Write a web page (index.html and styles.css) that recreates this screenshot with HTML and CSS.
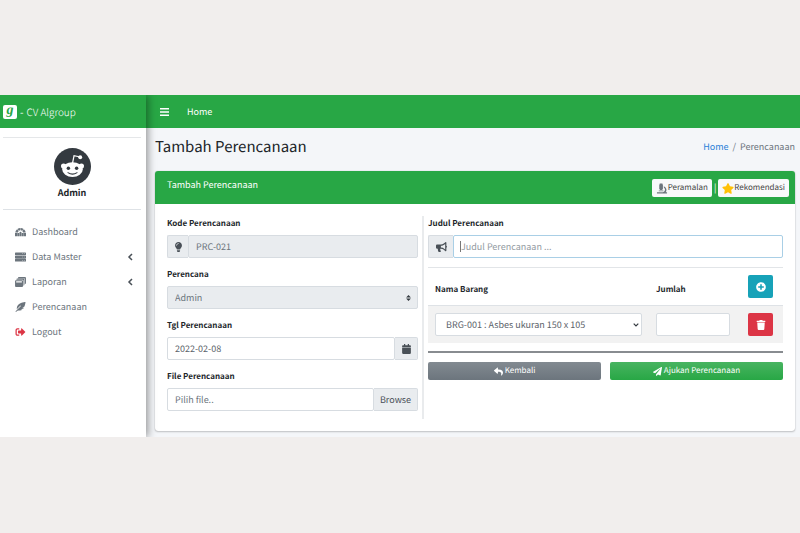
FILE: index.html
```html
<!DOCTYPE html>
<html lang="id">
<head>
<meta charset="utf-8">
<meta name="viewport" content="width=device-width, initial-scale=1">
<title>Tambah Perencanaan - CV Algroup</title>
<link rel="stylesheet" href="styles.css">
</head>
<body>
<div class="app">
  <aside class="sidebar">
    <a class="brand" href="#"><span class="brand-logo">g</span><b>-</b> CV Algroup</a>
    <div class="user">
      <svg class="avatar" viewBox="0 0 36 36" aria-hidden="true">
        <circle class="dark" cx="18" cy="18" r="18"/>
        <path d="M18 15l1.500-7.500 5 1" fill="none" stroke="#fff" stroke-width="1.200"/>
        <circle class="light" cx="25.500" cy="9" r="1.900"/>
        <circle class="light" cx="9.300" cy="17.500" r="2.500"/><circle class="light" cx="26.700" cy="17.500" r="2.500"/>
        <ellipse class="light" cx="18" cy="21" rx="10" ry="7.200"/>
        <circle class="dark" cx="14" cy="19.700" r="1.700"/><circle class="dark" cx="22" cy="19.700" r="1.700"/>
        <path class="smile" d="M13.500 24q4.500 2.800 9 0"/>
      </svg>
      <b>Admin</b>
    </div>
    <nav class="menu">
      <a href="#">
        <svg viewBox="0 0 24 20"><path d="M0 19v-7h5v7zm5.500 0v-7H9v7zm9.500 0v-7h3.500v7zm4 0v-7h5v7zM.5 11.300A12 12 0 0 1 4.500 4L8 8a7 7 0 0 0-1.500 3.300zM5.300 3.500A12 12 0 0 1 11.600 1v5a7 7 0 0 0-3 1.300zM12.400 1a12 12 0 0 1 6.300 2.500l-3.300 3.800a7 7 0 0 0-3-1.300zM19.500 4a12 12 0 0 1 4 7.300h-6A7 7 0 0 0 16 8zM9.700 19v-7a2.300 2.300 0 0 1 4.600 0v7z"/></svg>
        <span>Dashboard</span></a>
      <a href="#">
        <svg viewBox="0 0 24 20"><path fill-rule="evenodd" d="M1 0h22a1 1 0 0 1 1 1v4a1 1 0 0 1-1 1H1a1 1 0 0 1-1-1V1a1 1 0 0 1 1-1zm0 7h22a1 1 0 0 1 1 1v4a1 1 0 0 1-1 1H1a1 1 0 0 1-1-1V8a1 1 0 0 1 1-1zm0 7h22a1 1 0 0 1 1 1v4a1 1 0 0 1-1 1H1a1 1 0 0 1-1-1v-4a1 1 0 0 1 1-1zM16 2.300v1.400h1.500V2.300zm3.500 0v1.400H21V2.300zM16 9.300v1.400h1.500V9.300zm3.500 0v1.400H21V9.300zM16 16.300v1.400h1.500v-1.400zm3.500 0v1.400H21v-1.400z"/></svg>
        <span>Data Master</span>
        <svg class="chevron" viewBox="0 0 6 8"><path d="M5 1L2 4l3 3"/></svg></a>
      <a href="#">
        <svg viewBox="0 0 24 22"><path fill-rule="evenodd" d="M2 7h13.500a2 2 0 0 1 2 2v11a2 2 0 0 1-2 2H2a2 2 0 0 1-2-2V9a2 2 0 0 1 2-2zm.500 2.500V12H15V9.500zM3 6V5.500Q3 3.500 5 3.500h13.500q2 0 2 2V17q0 1.500-2 2V8q0-2-2-2zM6.500 2.500V2q0-2 2-2H22q2 0 2 2v11.500q0 1.500-2.500 2V4.500q0-2-2-2z"/></svg>
        <span>Laporan</span>
        <svg class="chevron" viewBox="0 0 6 8"><path d="M5 1L2 4l3 3"/></svg></a>
      <a href="#">
        <svg viewBox="0 0 512 512"><path d="M512 0C460.220 3.560 96.440 38.200 71.010 287.610c-3.090 26.660-4.840 53.440-5.990 80.240l178.870-178.690c6.250-6.250 16.400-6.250 22.650 0s6.250 16.380 0 22.630L7.040 471.030c-9.380 9.370-9.380 24.570 0 33.940 9.380 9.370 24.600 9.370 33.980 0l57.130-57.070c42.090-.140 84.150-2.530 125.960-7.360 53.480-5.440 97.020-26.470 132.580-56.540H255.740l146.790-48.880c11.250-14.890 21.370-30.710 30.450-47.120h-81.140l106.540-53.210C500.290 132.860 510.190 26.260 512 0z"/></svg>
        <span>Perencanaan</span></a>
      <a href="#">
        <svg class="red" viewBox="0 0 512 512"><path d="M497 273L329 441c-15 15-41 4.500-41-17v-96H152c-13.300 0-24-10.700-24-24v-96c0-13.300 10.700-24 24-24h136V88c0-21.400 25.900-32 41-17l168 168c9.300 9.400 9.300 24.600 0 34zM192 436v-40c0-6.600-5.400-12-12-12H96c-17.700 0-32-14.300-32-32V160c0-17.700 14.300-32 32-32h84c6.600 0 12-5.400 12-12V76c0-6.600-5.400-12-12-12H96c-53 0-96 43-96 96v192c0 53 43 96 96 96h84c6.600 0 12-5.400 12-12z"/></svg>
        <span>Logout</span></a>
    </nav>
  </aside>

  <div class="main">
    <nav class="topbar">
      <button class="toggle" type="button" aria-label="Menu"><svg viewBox="0 0 9 8"><path d="M0 0h9v1.500H0zM0 3.200h9v1.500H0zM0 6.400h9v1.500H0z"/></svg></button>
      <a href="#">Home</a>
    </nav>
    <header class="page-head">
      <h1>Tambah Perencanaan</h1>
      <div class="crumbs"><a href="#">Home</a><span>/</span><span>Perencanaan</span></div>
    </header>

    <section class="card">
      <div class="card-head">
        <h2>Tambah Perencanaan</h2>
        <div class="tools">
          <button type="button"><svg class="scope" viewBox="0 0 24 24"><path d="M7 1h6v2h1v10h-1v2H7v-2H6V3h1zM1 20h13a5.500 5.500 0 0 0 2-10V7a8.500 8.500 0 0 1 4 13h3v3H1zM5 16.500h10V18H5z"/></svg>Peramalan</button>
          <span>|</span>
          <button type="button"><svg class="star" viewBox="0 0 576 512"><path d="M259.300 17.800L194 150.200 47.900 171.500c-26.200 3.800-36.700 36.100-17.700 54.600l105.700 103-25 145.500c-4.500 26.300 23.200 46 46.400 33.700L288 439.600l130.700 68.700c23.200 12.200 50.900-7.400 46.400-33.700l-25-145.500 105.700-103c19-18.500 8.500-50.800-17.700-54.600L382 150.200 316.700 17.800c-11.700-23.600-45.600-23.900-57.400 0z"/></svg>Rekomendasi</button>
        </div>
      </div>

      <form class="card-body">
        <div class="col-left">
          <div class="field">
            <label for="kode">Kode Perencanaan</label>
            <div class="group">
              <span class="addon narrow"><svg viewBox="0 0 352 512"><path fill-rule="evenodd" d="M96 454c0 6 2 12 5 17l17 26c6 9 16 15 27 15h62c11 0 21-6 27-15l17-26c3-5 5-11 5-17v-38H96zM0 176c0 44 16 85 44 116 16 19 42 58 52 92h160c10-34 36-73 52-92 28-31 44-72 44-116C352 79 273 0 176 0S0 79 0 176zm176-80c-44 0-80 36-80 80 0 9-7 16-16 16s-16-7-16-16c0-62 50-112 112-112 9 0 16 7 16 16s-7 16-16 16z"/></svg></span>
              <input id="kode" type="text" value="PRC-021" readonly>
            </div>
          </div>
          <div class="field">
            <label for="perencana">Perencana</label>
            <div class="select-wrap">
              <select id="perencana" class="muted" disabled><option>Admin</option></select>
              <svg class="updown" viewBox="0 0 4 5"><path d="M2 0L0 2h4zM2 5L0 3h4z"/></svg>
            </div>
          </div>
          <div class="field">
            <label for="tgl">Tgl Perencanaan</label>
            <div class="group">
              <input id="tgl" type="text" value="2022-02-08">
              <span class="addon end"><svg viewBox="0 0 448 512"><path d="M12 192h424c6.600 0 12 5.400 12 12v260c0 26.500-21.500 48-48 48H48c-26.500 0-48-21.500-48-48V204c0-6.600 5.400-12 12-12zm436-44v-36c0-26.500-21.500-48-48-48h-48V12c0-6.600-5.400-12-12-12h-40c-6.600 0-12 5.400-12 12v52H160V12c0-6.600-5.400-12-12-12h-40c-6.600 0-12 5.400-12 12v52H48C21.500 64 0 85.500 0 112v36c0 6.600 5.400 12 12 12h424c6.600 0 12-5.400 12-12z"/></svg></span>
            </div>
          </div>
          <div class="field">
            <label for="file">File Perencanaan</label>
            <div class="group">
              <input id="file" type="text" value="Pilih file.." readonly class="file">
              <button class="addon end browse" type="button">Browse</button>
            </div>
          </div>
        </div>

        <div class="col-right">
          <div class="field">
            <label for="judul">Judul Perencanaan</label>
            <div class="group">
              <span class="addon"><svg viewBox="0 0 576 512"><path d="M576 240c0-23.630-12.950-44.040-32-55.120V32.010C544 23.260 537.020 0 512 0c-7.120 0-14.190 2.380-19.980 7.020l-85.030 68.030C364.280 109.190 310.660 128 256 128H64c-35.350 0-64 28.650-64 64v96c0 35.350 28.650 64 64 64h33.700c-1.390 10.480-2.180 21.140-2.180 32 0 39.770 9.260 77.350 25.560 110.940 5.190 10.690 16.520 17.060 28.400 17.060h74.280c26.050 0 41.690-29.840 25.900-50.560-16.400-21.520-26.150-48.360-26.150-77.440 0-11.110 1.620-21.790 4.410-32H256c54.660 0 108.280 18.810 150.980 52.950l85.030 68.030a32.023 32.023 0 0 0 19.980 7.020c24.920 0 32-22.780 32-32V295.130C563.050 284.040 576 263.630 576 240zm-96 141.420l-33.050-26.440C392.950 311.780 325.120 288 256 288v-96c69.120 0 136.950-23.780 190.950-66.980L480 98.580v282.840z"/></svg></span>
              <div class="caret-wrap"><input id="judul" class="focused" type="text" placeholder="Judul Perencanaan ..."></div>
            </div>
          </div>
          <table class="items">
            <thead>
              <tr><th>Nama Barang</th><th class="qty">Jumlah</th>
              <th class="act"><button class="square info" type="button" aria-label="Tambah barang"><svg viewBox="0 0 512 512"><path d="M256 8C119 8 8 119 8 256s111 248 248 248 248-111 248-248S393 8 256 8zm144 276c0 6.600-5.400 12-12 12h-92v92c0 6.600-5.400 12-12 12h-56c-6.600 0-12-5.400-12-12v-92h-92c-6.600 0-12-5.400-12-12v-56c0-6.600 5.400-12 12-12h92v-92c0-6.600 5.400-12 12-12h56c6.600 0 12 5.400 12 12v92h92c6.600 0 12 5.400 12 12v56z"/></svg></button></th></tr>
            </thead>
            <tbody>
              <tr><td><div class="select-wrap"><select aria-label="Nama Barang"><option>BRG-001 : Asbes ukuran 150 x 105</option></select><svg class="down" viewBox="0 0 6 4"><path d="M.7.700L3 3 5.300.7"/></svg></div></td>
              <td><input type="text" aria-label="Jumlah"></td>
              <td class="act"><button class="square danger" type="button" aria-label="Hapus barang"><svg viewBox="0 0 448 512"><path d="M432 32H312l-9.400-18.700A24 24 0 0 0 281.100 0H166.800a23.720 23.720 0 0 0-21.400 13.300L136 32H16A16 16 0 0 0 0 48v32a16 16 0 0 0 16 16h416a16 16 0 0 0 16-16V48a16 16 0 0 0-16-16zM53.200 467a48 48 0 0 0 47.900 45h245.800a48 48 0 0 0 47.900-45L416 128H32z"/></svg></button></td></tr>
            </tbody>
          </table>
          <hr>
          <div class="actions">
            <button class="back" type="button"><svg viewBox="0 0 512 512"><path d="M8.309 189.836L184.313 37.851C199.719 24.546 224 35.347 224 56.015v80.053c160.629 1.839 288 34.032 288 186.258 0 61.441-39.581 122.309-83.333 154.132-13.653 9.931-33.111-2.533-28.077-18.631 45.344-145.012-21.507-183.510-176.590-185.742V360c0 20.700-24.300 31.453-39.687 18.164l-176.004-152c-11.071-9.562-11.086-26.753 0-36.328z"/></svg>Kembali</button>
            <button class="send" type="button"><svg viewBox="0 0 512 512"><path d="M476 3.200L12.500 270.600c-18.100 10.400-15.800 35.600 2.200 43.200L121 358.400l287.300-253.200c5.500-4.900 13.300 2.600 8.600 8.300L176 407v80.500c0 23.600 28.500 32.900 42.500 15.800L282 426l124.600 52.200c14.200 6 30.400-2.900 33-18.200l72-432C515 7.800 493.300-6.800 476 3.200z"/></svg>Ajukan Perencanaan</button>
          </div>
        </div>
      </form>
    </section>
  </div>
</div>
</body>
</html>
```

FILE: styles.css
```css
* { box-sizing: border-box; }

body {
  margin: 0;
  padding: 95px 0;
  background: #f1eeed;
  color: #212529;
  font: 9px/16px "Noto Sans CJK SC", "Open Sans", sans-serif;
  text-rendering: geometricPrecision;
}

a { color: inherit; text-decoration: none; }
svg { display: block; fill: currentColor; flex: none; }
h1, h2 { margin: 0; font-weight: 400; }
button, input, select { font: inherit; color: inherit; margin: 0; text-rendering: inherit; }
button { display: flex; align-items: center; justify-content: center; padding: 0; border: 0; }

.app { display: grid; grid-template-columns: 146px minmax(0, 1fr); background: #f4f6f9; }

/* Sidebar */
.sidebar { position: relative; background: #fff; box-shadow: 2px 0 8px rgba(0, 0, 0, .4); clip-path: inset(0 -12px 0 0); }
.brand { display: flex; align-items: center; gap: 3px; height: 33px; padding-left: 3px; background: #28a745; color: #fff; font-size: 10px; font-weight: 300; }
.brand-logo { width: 14px; height: 14px; border-radius: 2px; background: #fff; color: #28a745; font: italic bold 14px/11px "Liberation Serif", serif; text-align: center; }
.user { display: flex; flex-direction: column; align-items: center; margin: 9px 5px 9px 3px; padding: 10px 0 8px; border-top: 1px solid #e5e7e9; border-bottom: 1px solid #dee2e6; }
.avatar { width: 37px; height: 37px; }
.avatar .dark { fill: #343a40; }
.avatar .light { fill: #fff; }
.avatar .smile { fill: none; stroke: #343a40; stroke-width: 1; stroke-linecap: round; }
.menu a { display: flex; align-items: center; gap: 6px; height: 25px; padding: 0 13px 0 15px; color: #6c757d; }
.menu svg { width: 11px; height: 10px; }
.menu span { flex: 1; }
.menu .red { color: #dc3545; }
.menu .chevron { width: 6px; height: 8px; fill: none; stroke: #495057; stroke-width: 1.500; }

/* Top bar and page title */
.topbar { display: flex; align-items: center; gap: 18px; height: 33px; padding-left: 14px; background: #28a745; color: #fff; }
.toggle { background: none; }
.toggle svg { width: 9px; height: 8px; }
.page-head { display: flex; align-items: center; justify-content: space-between; height: 43px; padding: 0 5px 6px 9px; }
h1 { font-size: 15px; line-height: 24px; }
.crumbs { display: flex; gap: 4px; color: #6c757d; }
.crumbs a { color: #2a80d8; }

/* Card */
.card { margin: 0 5px 6px 9px; border-radius: 3px; background: #fff; box-shadow: 0 0 1px rgba(0, 0, 0, .3), 0 1px 2px rgba(0, 0, 0, .2); }
.card-head { display: flex; justify-content: space-between; height: 33px; padding: 6px 6px 0 12px; border-radius: 3px 3px 0 0; background: #28a745; color: #fff; }
.card-head h2 { font-size: 9px; line-height: 16px; }
.tools { display: flex; align-items: center; gap: 2px; height: 22px; }
.tools button { height: 18px; padding: 0 4px; border-radius: 2px; background: #f8f9fa; color: #444; font-size: 8px; }
.tools svg { width: 12px; height: 11px; }
.tools .scope { fill: #6c757d; }
.tools .star { fill: #ffc107; }
.card-body { display: grid; grid-template-columns: 257fr 359fr; padding: 12px; }
.col-left { padding-right: 4px; border-right: 2px solid #e9ebed; }
.col-right { padding-left: 4px; }

/* Form fields */
.field { display: grid; gap: 3px; margin-bottom: 9px; }
.field:last-child { margin-bottom: 8px; }
.field label, .items th { font-size: 8px; font-weight: 700; }
.group { display: flex; }
input, select { width: 100%; min-width: 0; height: 23px; padding: 0 7px; border: 1px solid #d7dce1; border-radius: 2px; background: #fff; color: #5c636a; outline: 0; }
input[readonly], select:disabled { background: #e9ecef; opacity: 1; color: #6c757d; }
input.file { background: #fff; }
select { appearance: none; padding-left: 10px; }
select.muted { padding-left: 7px; }
.addon { display: flex; align-items: center; justify-content: center; flex: none; width: 25px; border: 1px solid #d7dce1; border-right: 0; border-radius: 2px 0 0 2px; background: #e9ecef; color: #495057; }
.addon svg { width: 11px; height: 10px; }
.addon.narrow { width: 21px; }
.addon.end { width: 23px; border: 1px solid #d7dce1; border-left: 0; border-radius: 0 2px 2px 0; }
.addon.browse { width: 44px; }
.select-wrap, .caret-wrap { position: relative; flex: 1; }
.updown, .down { position: absolute; top: 9px; right: 7px; width: 5px; height: 6px; color: #343a40; pointer-events: none; }
.down { right: 3px; width: 6px; fill: none; stroke: currentColor; stroke-width: 1.200; }
input.focused { border-color: #a9cfe6; }
input::placeholder { color: #939ba2; opacity: 1; }
.caret-wrap::before { content: ""; position: absolute; top: 6px; left: 7px; width: 1px; height: 11px; background: #777; }

/* Item table */
.items { width: 100%; table-layout: fixed; border-collapse: separate; border-spacing: 0; border-top: 1px solid #e2e5e8; }
.items th, .items td { padding: 7px; text-align: left; }
.items th { height: 38px; border-bottom: 1px solid #dee2e6; vertical-align: bottom; }
.items .qty { width: 88px; }
.items th.act { width: 46px; }
.items .act { padding-left: 11px; }
.items tbody tr { background: #f2f2f2; }
.square { width: 25px; height: 23px; border-radius: 2px; color: #fff; }
.square svg { width: 10px; height: 10px; }
.info { background: #17a2b8; }
.danger { background: #dc3545; }
hr { height: 2px; margin: 8px 0 9px; border: 0; background: #888c90; }
.actions { display: grid; grid-template-columns: 1fr 1fr; gap: 9px; }
.actions button { gap: 2px; height: 18px; border-radius: 2px; color: #fff; font-size: 8px; }
.actions svg { width: 9px; height: 9px; }
.back { background: linear-gradient(#828a91, #6c757d); }
.send { background: linear-gradient(#48b461, #28a745); }
```
